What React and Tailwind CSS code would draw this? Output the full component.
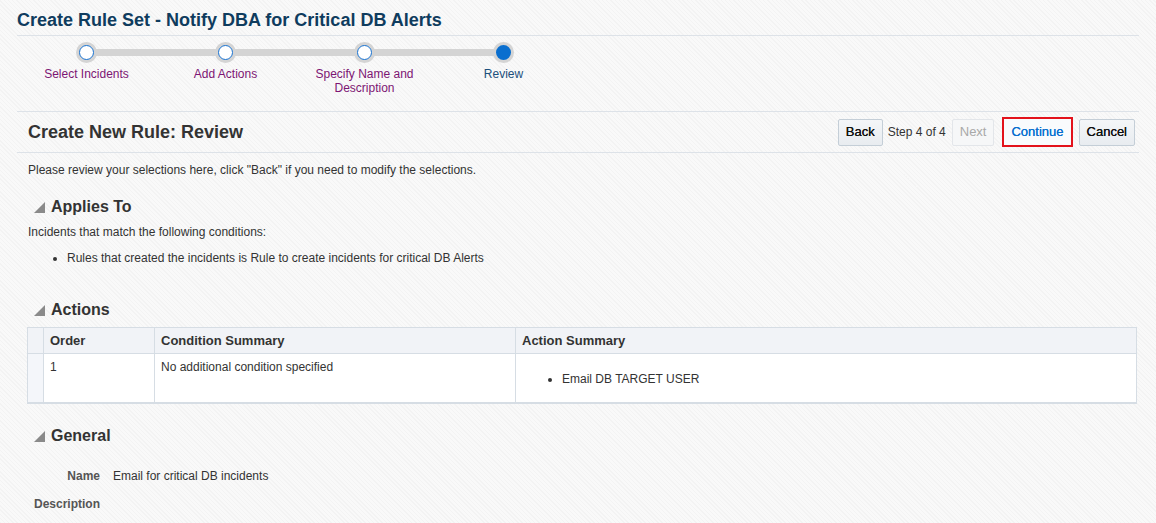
import React from 'react';

const steps = [
  { label: ['Select Incidents'], done: true },
  { label: ['Add Actions'], done: true },
  { label: ['Specify Name and', 'Description'], done: true },
  { label: ['Review'], current: true },
];

const Triangle = () => (
  <svg width="11" height="11" viewBox="0 0 11 11" className="shrink-0">
    <polygon points="11,0 11,11 0,11" fill="#8a8a8a" />
  </svg>
);

const SectionHeading = ({ children }) => (
  <div className="flex items-center gap-[6px] pl-[34px] h-[20px]">
    <Triangle />
    <h2 className="text-[16px] font-bold text-[#333] leading-none">{children}</h2>
  </div>
);

const Train = () => (
  <div className="relative ml-[17px] flex h-[75px] pt-[6px]">
    {/* connector bar behind the stops */}
    <div className="absolute left-[69px] top-[13px] h-[7px] w-[418px] rounded-full bg-[#d4d4d4]" />
    {steps.map((s, i) => (
      <div key={i} className="relative flex w-[139px] flex-col items-center">
        <div className="flex h-[21px] w-[21px] items-center justify-center rounded-full bg-[#d4d4d4]">
          {s.current ? (
            <div className="h-[15px] w-[15px] rounded-full bg-[#0a6fcf]" />
          ) : (
            <div className="h-[15px] w-[15px] rounded-full border-[1.5px] border-[#1a73d1] bg-white" />
          )}
        </div>
        <div
          className={`mt-[4px] text-center text-[12px] leading-[14px] ${
            s.current ? 'text-[#1c4f7c]' : 'text-[#7d1573]'
          }`}
        >
          {s.label.map((l) => (
            <div key={l}>{l}</div>
          ))}
        </div>
      </div>
    ))}
  </div>
);

const Btn = ({ children, disabled }) => (
  <button
    className={`h-[27px] rounded-[2px] border px-[7px] text-[13px] ${
      disabled
        ? 'border-[#e3e6ea] bg-[#f6f7f8] text-[#a9a9a9]'
        : 'border-[#c4ced7] bg-[linear-gradient(#f4f6f8,#e8ecf0)] text-[#111] [text-shadow:0_0_0.4px_#111]'
    }`}
  >
    {children}
  </button>
);

export default function App() {
  return (
    <div
      className="h-[523px] w-[1156px] overflow-hidden bg-[repeating-linear-gradient(45deg,#f3f3f3_0px,#f3f3f3_1px,#f9f9f9_1px,#f9f9f9_3px)] text-[#333]"
      style={{ fontFamily: '"Liberation Sans", Arial, sans-serif' }}
    >
      <div className="mx-[17px] flex h-[36px] items-end border-b border-[#dde2e8] pb-[6px]">
        <h1 className="text-[18px] font-bold leading-none text-[#0f3c5e]">
          Create Rule Set - Notify DBA for Critical DB Alerts
        </h1>
      </div>

      <Train />

      <div className="mx-[17px] flex h-[42px] items-center justify-between border-y border-[#dde2e8] pl-[11px] pr-[4px]">
        <h2 className="text-[18px] font-bold text-[#333]">Create New Rule: Review</h2>
        <div className="flex items-center">
          <Btn>Back</Btn>
          <span className="ml-[5px] mr-[6px] text-[12px] text-[#333]">Step 4 of 4</span>
          <Btn disabled>Next</Btn>
          <div className="ml-[8px] mr-[6px] border-2 border-[#e3121b]">
            <button className="h-[26px] bg-[#f9fbfd] px-[7px] text-[13px] text-[#0a6fcf] [text-shadow:0_0_0.4px_#0a6fcf]">
              Continue
            </button>
          </div>
          <Btn>Cancel</Btn>
        </div>
      </div>

      <p className="ml-[28px] mt-[10px] text-[12px] leading-[14px]">
        Please review your selections here, click "Back" if you need to modify the selections.
      </p>

      <div className="mt-[20px]">
        <SectionHeading>Applies To</SectionHeading>
        <p className="ml-[28px] mt-[8px] text-[12px] leading-[14px]">
          Incidents that match the following conditions:
        </p>
        <ul className="ml-[67px] mt-[12px] list-disc text-[12px] leading-[14px]">
          <li>Rules that created the incidents is Rule to create incidents for critical DB Alerts</li>
        </ul>
      </div>

      <div className="mt-[35px]">
        <SectionHeading>Actions</SectionHeading>
        <div className="ml-[27px] mt-[7px] w-[1110px] border border-b-2 border-[#d6dde4] bg-white">
          <div className="flex h-[25px] bg-[#f1f3f7] text-[13px] font-bold">
            <div className="w-[16px] border-r border-[#d6dde4]" />
            <div className="flex w-[111px] items-center border-r border-[#d6dde4] px-[6px]">Order</div>
            <div className="flex w-[361px] items-center border-r border-[#d6dde4] px-[6px]">Condition Summary</div>
            <div className="flex flex-1 items-center px-[6px]">Action Summary</div>
          </div>
          <div className="flex h-[49px] border-t border-[#d6dde4] text-[12px] leading-[14px]">
            <div className="w-[16px] border-r border-[#d6dde4] bg-[#f4f6fa]" />
            <div className="w-[111px] border-r border-[#d6dde4] px-[6px] pt-[6px]">1</div>
            <div className="w-[361px] border-r border-[#d6dde4] px-[6px] pt-[6px]">No additional condition specified</div>
            <div className="flex-1 pl-[46px] pt-[18px]">
              <ul className="list-disc">
                <li>Email DB TARGET USER</li>
              </ul>
            </div>
          </div>
        </div>
      </div>

      <div className="mt-[22px]">
        <SectionHeading>General</SectionHeading>
        <div className="mt-[23px] grid grid-cols-[66px_1fr] gap-x-[13px] gap-y-[14px] pl-[34px] text-[12px] leading-[14px]">
          <div className="text-right font-bold text-[#555]">Name</div>
          <div>Email for critical DB incidents</div>
          <div className="font-bold text-[#555]">Description</div>
          <div />
        </div>
      </div>
    </div>
  );
}
